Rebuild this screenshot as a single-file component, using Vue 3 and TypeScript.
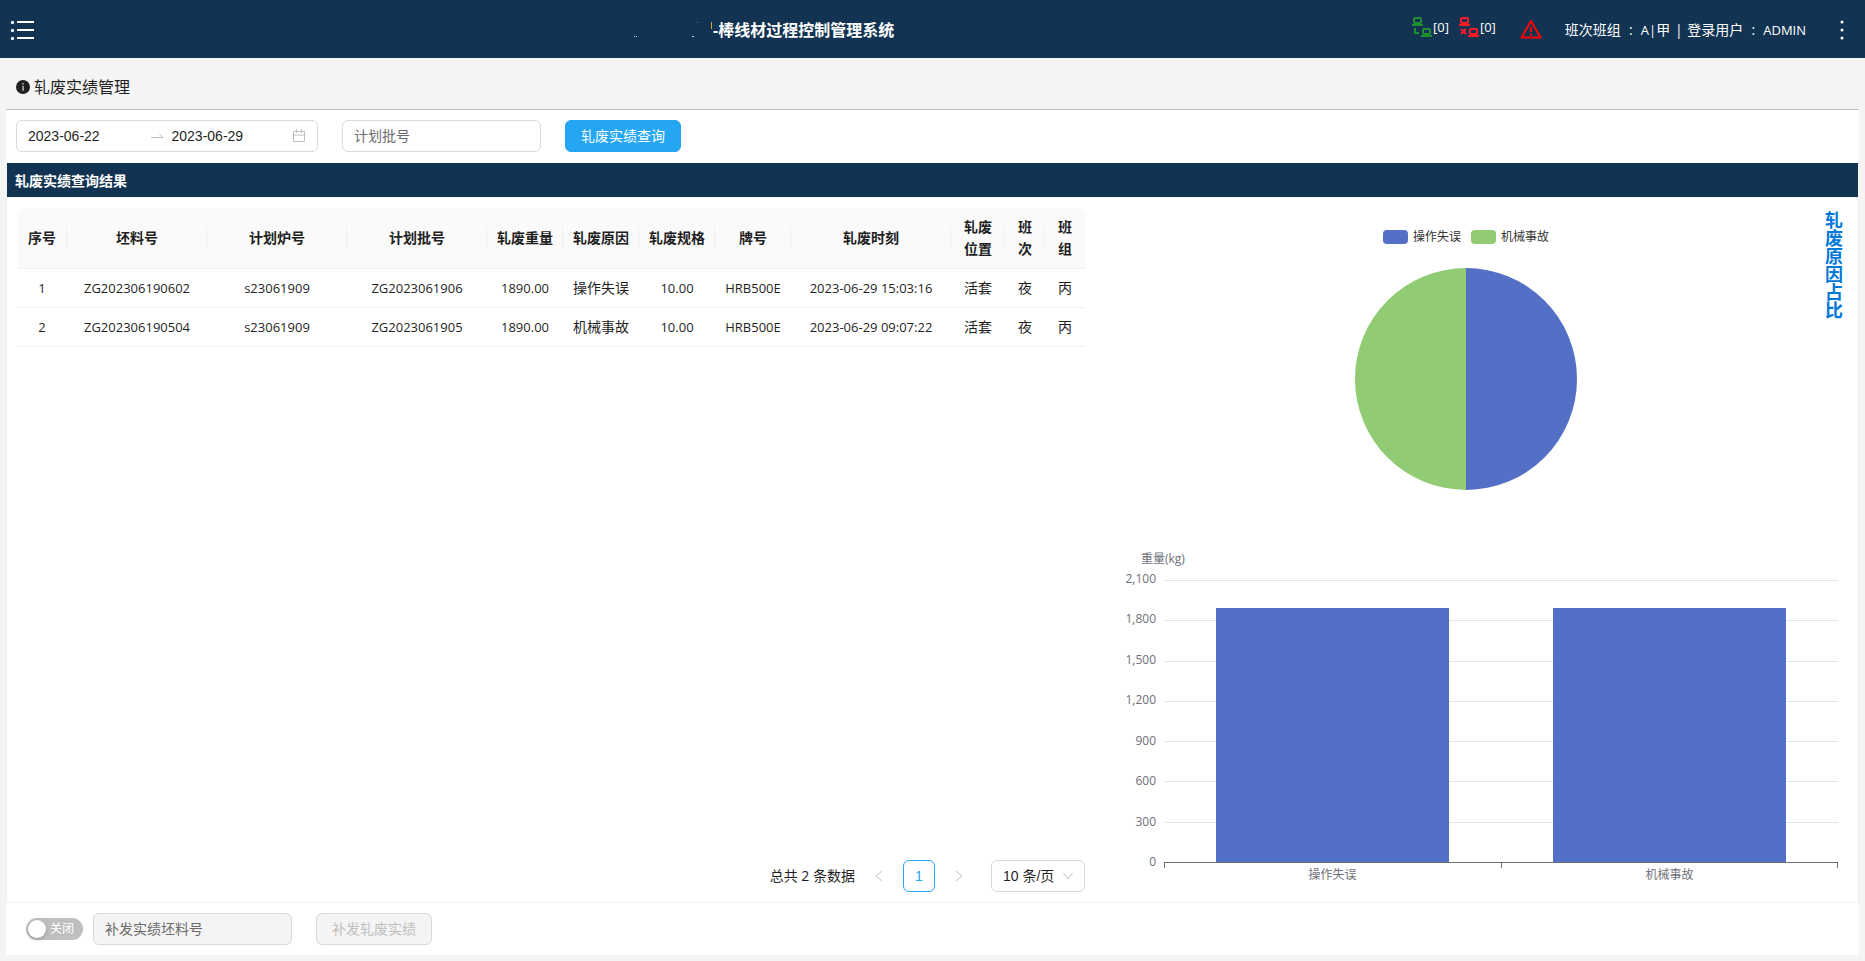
<script setup lang="ts">
import { computed, ref } from 'vue'

interface Column {
  key: string
  title: string
  width: number
}

interface Reason {
  name: string
  weight: number
  color: string
}

const columns: Column[] = [
  { key: 'no', title: '序号', width: 50 },
  { key: 'billet', title: '坯料号', width: 140 },
  { key: 'heat', title: '计划炉号', width: 140 },
  { key: 'batch', title: '计划批号', width: 140 },
  { key: 'weight', title: '轧废重量', width: 76 },
  { key: 'reason', title: '轧废原因', width: 76 },
  { key: 'spec', title: '轧废规格', width: 76 },
  { key: 'grade', title: '牌号', width: 76 },
  { key: 'time', title: '轧废时刻', width: 160 },
  { key: 'place', title: '轧废位置', width: 54 },
  { key: 'shift', title: '班次', width: 40 },
  { key: 'team', title: '班组', width: 40 },
]
const cjkKeys = ['reason', 'place', 'shift', 'team']

const rows: Record<string, string>[] = [
  {
    no: '1', billet: 'ZG202306190602', heat: 's23061909', batch: 'ZG2023061906', weight: '1890.00',
    reason: '操作失误', spec: '10.00', grade: 'HRB500E', time: '2023-06-29 15:03:16', place: '活套', shift: '夜', team: '丙',
  },
  {
    no: '2', billet: 'ZG202306190504', heat: 's23061909', batch: 'ZG2023061905', weight: '1890.00',
    reason: '机械事故', spec: '10.00', grade: 'HRB500E', time: '2023-06-29 09:07:22', place: '活套', shift: '夜', team: '丙',
  },
]

const reasons: Reason[] = [
  { name: '操作失误', weight: 1890, color: '#5470c6' },
  { name: '机械事故', weight: 1890, color: '#91cc75' },
]

const axisMax = 2100
const axisTicks = [2100, 1800, 1500, 1200, 900, 600, 300, 0]

const slices = computed(() => {
  const total = reasons.reduce((sum, r) => sum + r.weight, 0)
  let start = 0
  return reasons.map((r) => {
    const end = start + (r.weight / total) * Math.PI * 2
    const large = end - start > Math.PI ? 1 : 0
    const point = (a: number) => `${(111 + 111 * Math.sin(a)).toFixed(2)} ${(111 - 111 * Math.cos(a)).toFixed(2)}`
    const d = `M111 111L${point(start)}A111 111 0 ${large} 1 ${point(end)}Z`
    start = end
    return { d, color: r.color, name: r.name }
  })
})

const startDate = ref('2023-06-22')
const endDate = ref('2023-06-29')
const batchNo = ref('')
const billetNo = ref('')
const resend = ref(false)
const pageSize = ref('10')
</script>

<template>
  <div class="page">
    <header class="topbar">
      <button class="icon-btn" type="button" aria-label="菜单">
        <svg width="24" height="20" viewBox="0 0 24 20" fill="#fff">
          <rect x="0" y="1" width="3" height="3" rx="1" /><rect x="6" y="1" width="17" height="2" />
          <rect x="0" y="9" width="3" height="3" rx="1" /><rect x="6" y="9" width="17" height="2" />
          <rect x="0" y="17" width="3" height="3" rx="1" /><rect x="6" y="17" width="17" height="2" />
        </svg>
      </button>
      <h1 class="app-title">
        <svg width="79" height="16" viewBox="0 0 79 16" aria-hidden="true">
          <path d="M0 14h1v1H0zM2 14h1v1H2zM58 14h2v1h-2z" fill="#cdd6df" />
          <path d="M63 0h1v1h-1z" fill="#2f8fb8" />
          <path d="M77 0h1v7h-1z" fill="#d9a648" />
        </svg>
        <span>-棒线材过程控制管理系统</span>
      </h1>
      <div class="status">
        <span class="link online">
          <svg width="20" height="20" viewBox="0 0 20 20" fill="none" stroke="currentColor" stroke-width="2">
            <rect x="2" y="1" width="7" height="5" rx="1" /><path d="M0 8h11M3 11v5h4" />
            <rect x="11" y="12" width="7" height="5" rx="1" /><path d="M9 19h11" />
          </svg>
          <span>[0]</span>
        </span>
        <span class="link offline">
          <svg width="20" height="20" viewBox="0 0 20 20" fill="none" stroke="currentColor" stroke-width="2">
            <rect x="2" y="1" width="7" height="5" rx="1" /><path d="M0 8h11M2 12l5 5M7 12l-5 5" />
            <rect x="11" y="12" width="7" height="5" rx="1" /><path d="M9 19h11" />
          </svg>
          <span>[0]</span>
        </span>
        <svg class="alarm" width="22" height="20" viewBox="0 0 22 20" fill="none" stroke="#f00" stroke-width="2">
          <path d="M11 2L1.5 18.500h19z" stroke-linejoin="round" /><path d="M11 8v5M11 14.500v2" />
        </svg>
        <p class="user">
          <span>班次班组</span><span class="colon">:</span><span><b class="latin">A|</b>甲</span><span class="bar">|</span><span>登录用户</span><span class="colon">:</span><b class="latin">ADMIN</b>
        </p>
        <button class="icon-btn" type="button" aria-label="更多">
          <svg width="4" height="20" viewBox="0 0 4 20" fill="#fff">
            <circle cx="2" cy="2" r="1.500" /><circle cx="2" cy="10" r="1.500" /><circle cx="2" cy="18" r="1.500" />
          </svg>
        </button>
      </div>
    </header>

    <main class="body">
      <h2 class="page-title">
        <svg width="14" height="14" viewBox="0 0 14 14">
          <circle cx="7" cy="7" r="7" fill="#1f1f1f" />
          <path d="M6.300 3h1.500v1.600H6.300zM6.300 5.800h1.500v5H6.300z" fill="#bbb" />
        </svg>
        轧废实绩管理
      </h2>

      <form class="filters" @submit.prevent>
        <div class="range">
          <input v-model="startDate" type="text" aria-label="开始日期" />
          <svg width="16" height="16" viewBox="0 0 16 16" fill="none" stroke="#bfbfbf"><path d="M2 9.500h12L10.500 6" /></svg>
          <input v-model="endDate" type="text" aria-label="结束日期" />
          <svg width="14" height="14" viewBox="0 0 14 14" fill="none" stroke="#bfbfbf">
            <path d="M1.500 2.500h11v10h-11zM1.500 6h11M4.500 0v4M9.500 0v4" />
          </svg>
        </div>
        <input v-model="batchNo" class="field" type="text" placeholder="计划批号" aria-label="计划批号" />
        <button class="btn primary" type="submit">轧废实绩查询</button>
      </form>

      <h3 class="section-title">轧废实绩查询结果</h3>

      <section class="content">
        <div class="list">
          <table>
            <colgroup>
              <col v-for="c in columns" :key="c.key" :style="{ width: c.width + 'px' }" />
            </colgroup>
            <thead>
              <tr><th v-for="c in columns" :key="c.key" scope="col">{{ c.title }}</th></tr>
            </thead>
            <tbody>
              <tr v-for="row in rows" :key="row.no">
                <td v-for="c in columns" :key="c.key" :class="{ latin: !cjkKeys.includes(c.key) }">{{ row[c.key] }}</td>
              </tr>
            </tbody>
          </table>
          <nav class="pager" aria-label="分页">
            <span>总共 2 条数据</span>
            <button class="step" type="button" aria-label="上一页" disabled>
              <svg width="10" height="12" viewBox="0 0 10 12" fill="none" stroke="#bfbfbf"><path d="M8 1L2 6l6 5" /></svg>
            </button>
            <button class="current" type="button">1</button>
            <button class="step" type="button" aria-label="下一页" disabled>
              <svg width="10" height="12" viewBox="0 0 10 12" fill="none" stroke="#bfbfbf"><path d="M2 1l6 5-6 5" /></svg>
            </button>
            <span class="size">
              <select v-model="pageSize" aria-label="每页条数">
                <option value="10">10 条/页</option>
                <option value="20">20 条/页</option>
              </select>
              <svg width="10" height="8" viewBox="0 0 10 8" fill="none" stroke="#bfbfbf"><path d="M0.500 1L5 7l4.500-6" /></svg>
            </span>
          </nav>
        </div>

        <div class="charts">
          <div class="pie-chart">
            <ul class="legend">
              <li v-for="r in reasons" :key="r.name"><i :style="{ background: r.color }"></i>{{ r.name }}</li>
            </ul>
            <svg width="222" height="222" viewBox="0 0 222 222" role="img" aria-label="轧废原因占比">
              <path v-for="s in slices" :key="s.name" :d="s.d" :fill="s.color" />
            </svg>
            <h4 class="side-title">轧废原因占比</h4>
          </div>

          <div class="bar-chart">
            <p class="unit">重量(kg)</p>
            <div class="scale">
              <span v-for="t in axisTicks" :key="t">{{ t.toLocaleString('en-US') }}</span>
            </div>
            <div class="plot">
              <div class="grid"><i v-for="t in axisTicks.slice(1)" :key="t"></i></div>
              <div class="bars">
                <div v-for="r in reasons" :key="r.name" class="slot">
                  <div class="bar-fill" :style="{ height: (r.weight / axisMax) * 100 + '%' }"></div>
                </div>
              </div>
            </div>
            <div class="names">
              <span v-for="r in reasons" :key="r.name">{{ r.name }}</span>
            </div>
          </div>
        </div>
      </section>

      <form class="footer" @submit.prevent>
        <label class="switch">
          <input v-model="resend" type="checkbox" role="switch" />
          <span>{{ resend ? '开启' : '关闭' }}</span>
        </label>
        <input v-model="billetNo" class="field" type="text" placeholder="补发实绩坯料号" aria-label="补发实绩坯料号" :disabled="!resend" />
        <button class="btn" type="submit" :disabled="!resend">补发轧废实绩</button>
      </form>
    </main>
  </div>
</template>

<style>
body {
  margin: 0;
  background: #f4f4f4;
}
</style>

<style scoped>
* {
  box-sizing: border-box;
}
.page {
  display: flex;
  flex-direction: column;
  min-height: 100vh;
  font: 14px/22px "Open Sans", "Noto Sans CJK SC", sans-serif;
  color: #1f1f1f;
}
h1, h2, h3, h4, p, ul {
  margin: 0;
  padding: 0;
  font-size: 14px;
}
svg {
  display: block;
  flex: none;
}
input, button, select {
  font: 14px/22px "Liberation Sans", "Noto Sans CJK SC", sans-serif;
  color: inherit;
  margin: 0;
}
.latin {
  font-size: 13px;
  font-weight: 400;
}

/* top bar */
.topbar {
  display: grid;
  grid-template-columns: 34% 1fr auto;
  align-items: center;
  height: 58px;
  padding-top: 2px;
  background: #133352;
  color: #fff;
}
.icon-btn {
  display: flex;
  justify-self: start;
  padding: 0;
  margin-left: 11px;
  border: 0;
  background: none;
}
.app-title {
  display: flex;
  align-items: center;
  font-size: 16px;
}
.status {
  display: flex;
  align-items: center;
  padding-right: 21px;
}
.link {
  display: flex;
  align-items: center;
  gap: 1px;
  margin-right: 10px;
  padding-bottom: 6px;
  font-size: 13px;
  line-height: 20px;
}
.online svg {
  color: #1e8e2e;
}
.offline svg {
  color: #ff1a28;
}
.alarm {
  margin: 0 23px 2px 14px;
}
.user {
  display: flex;
  font-weight: 400;
}
.colon {
  width: 20px;
  text-align: center;
}
.bar {
  width: 17px;
  text-align: center;
}
.status .icon-btn {
  margin-left: 34px;
}

/* page body */
.body {
  display: flex;
  flex: 1;
  flex-direction: column;
  padding: 0 6px 6px;
}
.page-title {
  display: flex;
  align-items: center;
  gap: 4px;
  height: 52px;
  padding: 6px 10px 0;
  border-bottom: 1px solid #bfbfbf;
  font-size: 16px;
  font-weight: 400;
}
.filters {
  display: flex;
  gap: 24px;
  height: 53px;
  padding: 10px;
  background: #fff;
}
.range, .field, .btn {
  height: 32px;
  border: 1px solid #d9d9d9;
  border-radius: 6px;
  background: #fff;
}
.range {
  display: flex;
  align-items: center;
  width: 302px;
  padding: 0 11px;
}
.range input {
  flex: 1;
  min-width: 0;
  padding: 0;
  border: 0;
  outline: 0;
  background: none;
}
.range svg:nth-of-type(1) {
  margin-right: 7px;
}
.field {
  width: 199px;
  padding: 0 11px;
}
.field::placeholder {
  color: #6b6b6b;
  opacity: 1;
}
.btn {
  padding: 0 15px;
}
.btn.primary {
  border-color: #24a6f2;
  background: #24a6f2;
  color: #fff;
}
.section-title {
  height: 34px;
  margin: 0 1px;
  padding: 0 8px;
  background: #133352;
  color: #fff;
  line-height: 36px;
}
.content {
  display: grid;
  flex: 1;
  grid-template-columns: 7fr 5fr;
  margin: 0;
  border: 1px solid #f0f0f0;
  background: #fff;
}

/* result list */
.list {
  display: flex;
  flex-direction: column;
  justify-content: space-between;
  padding: 10px 2px 10px 10px;
}
table {
  width: 100%;
  table-layout: fixed;
  border-collapse: separate;
  border-spacing: 0;
}
th, td {
  padding: 8px;
  border-bottom: 1px solid #f0f0f0;
  text-align: center;
}
th {
  position: relative;
  background: #fafafa;
}
th:nth-last-child(-n + 3) {
  padding: 8px 11px;
}
th:not(:last-child)::after {
  content: "";
  position: absolute;
  top: calc(50% - 11px);
  right: 0;
  width: 1px;
  height: 22px;
  background: #f0f0f0;
}
th:first-child {
  border-top-left-radius: 8px;
}
th:last-child {
  border-top-right-radius: 8px;
}
td {
  white-space: nowrap;
}
.pager {
  display: flex;
  align-items: center;
  justify-content: flex-end;
}
.pager button {
  display: flex;
  align-items: center;
  justify-content: center;
  width: 32px;
  height: 32px;
  padding: 0;
  border: 0;
  border-radius: 6px;
  background: none;
}
.pager .step {
  margin: 0 8px;
}
.pager .current {
  border: 1px solid #24a6f2;
  color: #24a6f2;
}
.size {
  display: flex;
  align-items: center;
  width: 94px;
  height: 32px;
  margin-left: 8px;
  padding-right: 11px;
  border: 1px solid #d9d9d9;
  border-radius: 6px;
}
.size select {
  flex: 1;
  min-width: 0;
  height: 30px;
  padding: 0 0 0 11px;
  border: 0;
  outline: 0;
  background: none;
  appearance: none;
}

/* charts */
.charts {
  display: grid;
  grid-template-rows: 1fr 1fr;
}
.pie-chart {
  position: relative;
  display: flex;
  flex-direction: column;
  align-items: center;
  padding: 29px 13px 0 0;
}
.legend {
  display: flex;
  gap: 10px;
  margin-bottom: 21px;
  font-size: 12px;
  line-height: 20px;
  color: #333;
  list-style: none;
}
.legend li {
  display: flex;
  align-items: center;
  gap: 5px;
}
.legend i {
  width: 25px;
  height: 14px;
  border-radius: 4px;
}
.side-title {
  position: absolute;
  top: 13px;
  right: 15px;
  width: 18px;
  color: #0078d7;
  font-size: 18px;
  line-height: 18px;
}
.bar-chart {
  display: grid;
  grid-template: 30px 1fr 39px / 69px 1fr;
  padding-right: 20px;
  font-size: 12px;
  line-height: 18px;
  color: #6e7079;
}
.unit {
  grid-column: 1 / 3;
  padding-left: 54px;
  font-size: 12px;
  font-weight: 400;
}
.scale {
  display: flex;
  flex-direction: column;
  justify-content: space-between;
  margin: -10px 0 -8px;
  text-align: right;
}
.plot {
  position: relative;
  margin-left: 8px;
  border-bottom: 1px solid #6e7079;
}
.grid {
  display: flex;
  flex-direction: column;
  height: 100%;
}
.grid i {
  flex: 1;
  border-top: 1px solid #e0e6f1;
}
.bars {
  position: absolute;
  inset: 0;
  display: flex;
}
.slot {
  display: flex;
  flex: 1;
  align-items: flex-end;
  justify-content: center;
}
.bar-fill {
  width: 69%;
  background: #5470c6;
}
.names {
  display: flex;
  grid-column: 2;
  margin-left: 8px;
  text-align: center;
}
.names span {
  position: relative;
  flex: 1;
  padding-top: 3px;
}
.names span::before, .names span:last-child::after {
  content: "";
  position: absolute;
  top: 0;
  left: 0;
  width: 1px;
  height: 5px;
  background: #6e7079;
}
.names span:last-child::after {
  right: 0;
  left: auto;
}

/* footer */
.footer {
  display: flex;
  align-items: center;
  height: 52px;
  padding: 0 20px;
  background: #fff;
}
.switch {
  position: relative;
  margin-right: 10px;
}
.switch input {
  display: block;
  width: 57px;
  height: 22px;
  border-radius: 11px;
  background: #bfbfbf;
  appearance: none;
}
.switch input::before {
  content: "";
  display: block;
  width: 18px;
  height: 18px;
  margin: 2px;
  border-radius: 9px;
  background: #fff;
  box-shadow: 0 2px 4px rgba(0, 35, 11, 0.2);
}
.switch input {
  padding-top: 2px;
}
.switch input::before {
  margin: 0 2px;
}
.switch input:checked {
  background: #24a6f2;
}
.switch input:checked::before {
  margin-left: 37px;
}
.switch span {
  position: absolute;
  top: 0;
  right: 9px;
  color: #fff;
  font-size: 12px;
}
.switch input:checked + span {
  right: 24px;
}
.footer .btn {
  margin-left: 24px;
}
.field:disabled, .btn:disabled {
  background: #f4f4f4;
}
.btn:disabled {
  color: #bfbfbf;
}
</style>
